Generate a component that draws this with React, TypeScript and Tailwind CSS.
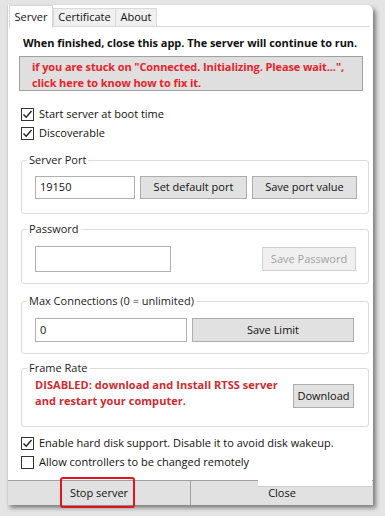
import React from 'react';

const font = { fontFamily: '"Open Sans", "Noto Sans", sans-serif' };

const Check = ({ checked }: { checked: boolean }) => (
  <span className="flex h-[13px] w-[13px] shrink-0 items-center justify-center border border-[#333] bg-white">
    {checked && (
      <svg width="11" height="11" viewBox="0 0 11 11">
        <path d="M1.5 5.5 L4.2 8.3 L9.5 2" fill="none" stroke="#222" strokeWidth="1.4" />
      </svg>
    )}
  </span>
);

const CheckRow = ({ label, checked, className }: { label: string; checked: boolean; className?: string }) => (
  <div className={`ml-[13px] flex h-[16px] items-center gap-[5px] ${className ?? ''}`}>
    <Check checked={checked} />
    <span className="text-[#111]">{label}</span>
  </div>
);

const Btn = ({ label, className, disabled }: { label: string; className?: string; disabled?: boolean }) => (
  <button
    className={`flex items-center justify-center border ${
      disabled ? 'border-[#cfcfcf] bg-[#f0f0f0] text-[#a0a0a0]' : 'border-[#adadad] bg-[#e1e1e1] text-[#111]'
    } ${className ?? ''}`}
  >
    {label}
  </button>
);

const Group = ({ title, className, children }: { title: string; className?: string; children: React.ReactNode }) => (
  <fieldset className={`ml-[13px] w-[348px] rounded-[3px] border border-[#dcdcdc] ${className ?? ''}`}>
    <legend className="ml-[5px] h-[16px] px-[2px] leading-[16px] text-[#222]">{title}</legend>
    {children}
  </fieldset>
);

const App = () => {
  return (
    <div
      className="relative h-[516px] w-[385px] overflow-hidden whitespace-nowrap bg-[#e4e4e4] pl-[7px] pt-[5px] text-[11px]"
      style={font}
    >
      <div className="flex h-[500px] w-[366px] flex-col rounded-tr-[6px] border-l border-[#cfcfcf] bg-white shadow-[3px_3px_4px_rgba(0,0,0,0.45)]">
        {/* tabs */}
        <div className="flex h-[22px] items-end">
          <div className="ml-[1px] flex h-[23px] w-[44px] items-center justify-center self-start border-x border-t border-[#d9d9d9] bg-white text-[#111]">
            Server
          </div>
          <div className="flex h-[19px] w-[63px] items-center justify-center border border-[#d9d9d9] bg-[#f0f0f0] text-[#111]">
            Certificate
          </div>
          <div className="flex h-[19px] w-[41px] items-center justify-center border border-l-0 border-[#d9d9d9] bg-[#f0f0f0] text-[#111]">
            About
          </div>
          <div className="mr-[3px] h-[1px] flex-1 bg-[#d9d9d9]" />
        </div>

        <div className="mt-[8px] ml-[15px] h-[16px] font-bold leading-[16px] tracking-[-0.05px] text-[#111]">
          When finished, close this app. The server will continue to run.
        </div>
        <div className="mt-[5px] ml-[11px] h-[35px] w-[344px] border border-[#a0a0a0] bg-[#dfdfdf] pl-[12px] pt-[2px] font-bold leading-[16px] tracking-[-0.1px] text-[#e8232b]">
          <div>if you are stuck on "Connected. Initializing. Please wait...",</div>
          <div>click here to know how to fix it.</div>
        </div>

        <CheckRow label="Start server at boot time" checked className="mt-[15px]" />
        <CheckRow label="Discoverable" checked className="mt-[3px]" />

        <Group title="Server Port" className="mt-[11px] h-[62px]">
          <div className="ml-[13px] mt-[8px] flex h-[23px] items-stretch">
            <div className="flex w-[100px] items-center border border-[#b0b0b0] pl-[4px] text-[#111]">19150</div>
            <Btn label="Set default port" className="ml-[5px] w-[107px]" />
            <Btn label="Save port value" className="ml-[5px] w-[105px]" />
          </div>
        </Group>

        <Group title="Password" className="mt-[7px] h-[63px]">
          <div className="ml-[13px] mt-[9px] flex h-[26px] items-center">
            <div className="h-[26px] w-[136px] border border-[#b0b0b0]" />
            <Btn label="Save Password" disabled className="ml-[91px] h-[24px] w-[94px]" />
          </div>
        </Group>

        <Group title="Max Connections (0 = unlimited)" className="mt-[9px] h-[61px]">
          <div className="ml-[13px] mt-[9px] flex h-[24px] items-stretch">
            <div className="flex w-[152px] items-center border border-[#b0b0b0] pl-[4px] text-[#111]">0</div>
            <Btn label="Save Limit" className="ml-[5px] w-[162px]" />
          </div>
        </Group>

        <Group title="Frame Rate" className="mt-[6px] h-[67px]">
          <div className="ml-[13px] mt-[1px] flex items-start">
            <div className="w-[250px] font-bold leading-[16px] tracking-[0.05px] text-[#cf2a2f]">
              <div>DISABLED: download and Install RTSS server</div>
              <div>and restart your computer.</div>
            </div>
            <Btn label="Download" className="ml-[8px] mt-[7px] h-[24px] w-[61px]" />
          </div>
        </Group>

        <CheckRow label="Enable hard disk support. Disable it to avoid disk wakeup." checked className="mt-[8px]" />
        <CheckRow label="Allow controllers to be changed remotely" checked={false} className="mt-[3px]" />

        <div className="mt-auto flex h-[25px] border-t border-[#a0a0a0] bg-[#e1e1e1] text-[#111]">
          <div className="flex w-[183px] items-center justify-center border-r border-[#a0a0a0]">Stop server</div>
          <div className="flex flex-1 items-center justify-center">Close</div>
        </div>
      </div>

      {/* white leftover patch over the close button */}
      <div className="absolute left-[258px] top-[471px] h-[16px] w-[114px] border-b border-[#cfcfcf] bg-white" />
      {/* red highlight around stop server */}
      <div className="absolute left-[60px] top-[477px] h-[31px] w-[75px] rounded-[3px] border-[2.5px] border-[#e0161e]" />
    </div>
  );
};

export default App;
